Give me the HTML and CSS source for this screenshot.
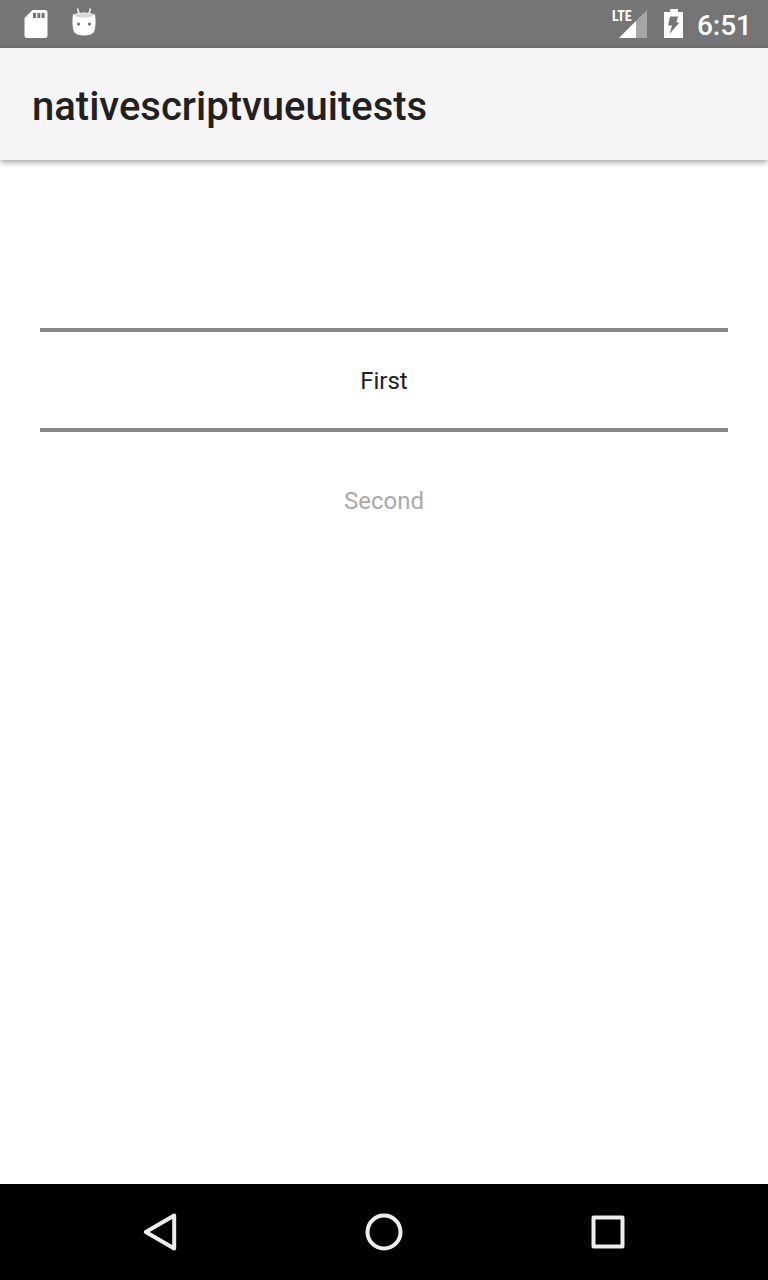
FILE: index.html
```html
<!DOCTYPE html>
<html lang="en">
<head>
<meta charset="utf-8">
<meta name="viewport" content="width=device-width, initial-scale=1">
<title>nativescriptvueuitests</title>
<link rel="stylesheet" href="styles.css">
</head>
<body>
<div class="status-bar">
  <div class="status-group notifications">
    <svg width="24" height="48" viewBox="0 0 24 48" aria-hidden="true">
      <path fill="#fff" fill-rule="evenodd" d="M8.500 10H21a2.500 2.500 0 0 1 2.500 2.500v23a2.500 2.500 0 0 1-2.500 2.500H3a2.500 2.500 0 0 1-2.500-2.500V18zM9 13v5h3v-5zM13.300 13v5h3v-5zM17.600 13v5h3v-5z"/>
    </svg>
    <svg width="24" height="48" viewBox="0 0 24 48" aria-hidden="true">
      <path d="M5.500 8.500l1.500 5M18.500 8.500l-1.500 5" stroke="#fff" stroke-width="1.500" fill="none"/>
      <path fill="#fff" d="M1 14.500Q12 10.500 23 14.500Q24.500 26 22 32Q19 35.500 12 35.500T2 32Q-.5 26 1 14.500z"/>
      <path fill="#d9d9d9" d="M1.500 14.800Q12 11 22.500 14.800Q20 17.800 12 17.800T1.500 14.800z"/>
      <circle cx="6.500" cy="24" r="1.500" fill="#666"/><circle cx="17.500" cy="24" r="1.500" fill="#666"/>
    </svg>
  </div>
  <div class="status-group">
    <div class="signal">
      <svg width="36" height="48" viewBox="0 0 36 48" aria-hidden="true">
        <path fill="#fff" fill-opacity=".35" d="M35 10v28H7z"/>
        <path fill="#fff" d="M24 21v17H7z"/>
      </svg>
      <span class="network">LTE</span>
    </div>
    <svg class="battery" width="20" height="48" viewBox="0 0 20 48" aria-hidden="true">
      <path fill="#fff" d="M6 9h8v3h5v26H0V12h6z"/>
      <path fill="#757575" d="M6 16.500H14L12.500 22.500H15.500L5.500 34l2.500-8.500H4z"/>
    </svg>
    <time class="clock">6:51</time>
  </div>
</div>
<header class="action-bar">
  <h1 class="title">nativescriptvueuitests</h1>
</header>
<main class="content">
  <div class="picker" role="listbox" aria-label="Item">
    <button class="option selected" type="button" role="option" aria-selected="true">First</button>
    <button class="option next" type="button" role="option" aria-selected="false">Second</button>
  </div>
</main>
<nav class="nav-bar" aria-label="System">
  <button class="nav-button" type="button" aria-label="Back">
    <svg width="48" height="48" viewBox="0 0 48 48" fill="none" stroke="#eee" stroke-width="4" stroke-linejoin="round"><path d="M38.200 7.500v33L9.800 24z"/></svg>
  </button>
  <button class="nav-button" type="button" aria-label="Home">
    <svg width="48" height="48" viewBox="0 0 48 48" fill="none" stroke="#eee" stroke-width="4"><circle cx="24" cy="24" r="16.500"/></svg>
  </button>
  <button class="nav-button" type="button" aria-label="Overview">
    <svg width="48" height="48" viewBox="0 0 48 48" fill="none" stroke="#eee" stroke-width="4" stroke-linejoin="round"><path d="M9.500 9.500h29v29h-29z"/></svg>
  </button>
</nav>
</body>
</html>
```
FILE: styles.css
```css
* {
  box-sizing: border-box;
}

body {
  margin: 0;
  min-height: 100vh;
  display: flex;
  flex-direction: column;
  background: #fff;
  color: #212121;
  font-family: Roboto, "Noto Sans", sans-serif;
}

svg {
  display: block;
}

button {
  border: 0;
  padding: 0;
  background: none;
  font: inherit;
  color: inherit;
}

.status-bar {
  display: flex;
  justify-content: space-between;
  height: 48px;
  padding: 0 16px 0 24px;
  background: #757575;
  color: #fff;
}

.status-group {
  display: flex;
  align-items: center;
}

.notifications {
  gap: 24px;
}

.signal {
  position: relative;
}

.network {
  position: absolute;
  left: 0;
  top: 8px;
  font-family: "Roboto Condensed", "Liberation Sans Narrow", Roboto, sans-serif;
  font-size: 14px;
  font-weight: 700;
  line-height: 16px;
}

.battery {
  margin: 0 13px 0 16px;
}

.clock {
  padding-top: 4px;
  font-size: 28px;
  font-weight: 500;
  line-height: 32px;
}

.action-bar {
  display: flex;
  align-items: center;
  height: 112px;
  padding: 6px 32px 0;
  background: #f5f5f5;
  box-shadow: 0 2px 6px rgba(0, 0, 0, 0.4);
}

.title {
  margin: 0;
  font-size: 40px;
  font-weight: 500;
  line-height: 48px;
}

.content {
  flex: 1;
  padding: 168px 40px 0;
}

.picker {
  display: flex;
  flex-direction: column;
}

.option {
  font-size: 24px;
  line-height: 32px;
  text-align: center;
}

.selected {
  height: 104px;
  padding-top: 2px;
  border-top: 4px solid #888;
  border-bottom: 4px solid #888;
}

.next {
  padding: 53px 0 40px;
  color: #a9a9a9;
}

.nav-bar {
  display: flex;
  justify-content: center;
  gap: 64px;
  height: 96px;
  background: #000;
}

.nav-button {
  display: flex;
  align-items: center;
  justify-content: center;
  width: 160px;
}
```
